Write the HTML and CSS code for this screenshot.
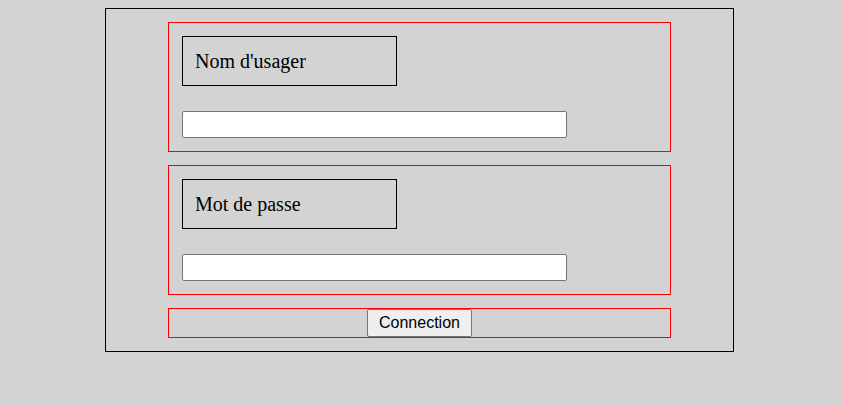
FILE: index.html
```html
<!DOCTYPE html>
<html lang="fr">
<head>
<meta charset="utf-8">
<title>Connexion</title>
<link rel="stylesheet" href="styles.css">
</head>
<body>
<form class="login">
  <div class="field">
    <label class="field-label" for="user">Nom d'usager</label>
    <input class="field-input" id="user" type="text">
  </div>
  <div class="field">
    <label class="field-label" for="pass">Mot de passe</label>
    <input class="field-input" id="pass" type="password">
  </div>
  <div class="actions">
    <button class="submit" type="button">Connection</button>
  </div>
</form>
</body>
</html>
```

FILE: styles.css
```css
html, body {
  background: #d3d3d3;
}
body {
  margin: 8px;
  font-family: "Liberation Serif", "Times New Roman", serif;
}
.login {
  box-sizing: border-box;
  width: 629px;
  margin: 0 0 0 97px;
  border: 1px solid #000;
  padding: 13px 62px;
  display: flex;
  flex-direction: column;
  gap: 13px;
}
.field {
  border: 1px solid #f00;
  padding: 13px;
  display: flex;
  flex-direction: column;
  align-items: flex-start;
  gap: 25px;
}
.field-label {
  box-sizing: border-box;
  width: 215px;
  height: 50px;
  border: 1px solid #000;
  padding: 12px 12px;
  font-size: 20px;
  line-height: 24px;
  color: #000;
}
.field-input {
  box-sizing: border-box;
  width: 385px;
  height: 27px;
  margin: 0;
  border: 1px solid #767676;
  border-radius: 2px;
  background: #fff;
  padding: 1px 4px;
  font-size: 16px;
}
.actions {
  border: 1px solid #f00;
  display: flex;
  justify-content: center;
}
.submit {
  box-sizing: border-box;
  width: 105px;
  height: 28px;
  margin: 0;
  padding: 0;
  border: 1px solid #767676;
  border-radius: 2px;
  background: #efefef;
  font-family: "Liberation Sans", Arial, sans-serif;
  font-size: 16px;
  color: #000;
}
```
